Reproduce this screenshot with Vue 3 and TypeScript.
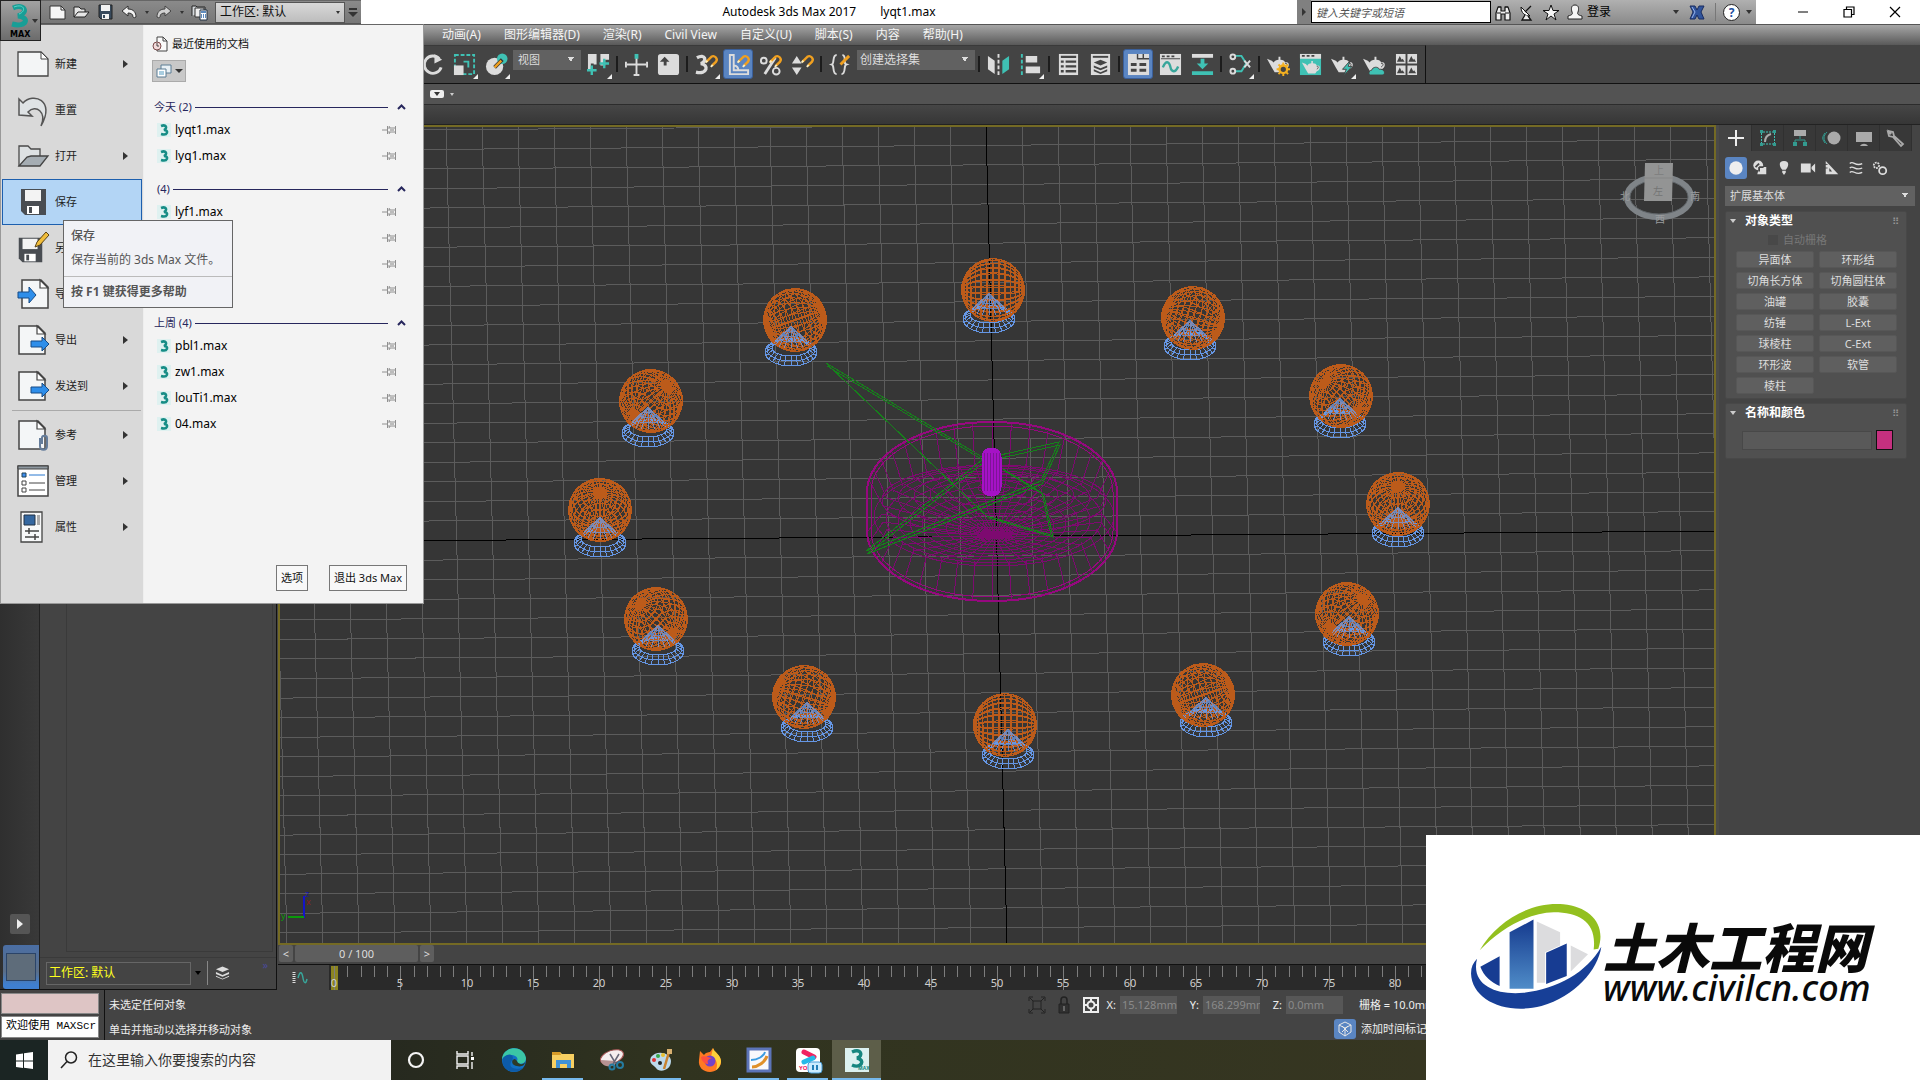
<script setup lang="ts">
interface MenuItem { label: string; icon: string; arrow: boolean; selected?: boolean; separated?: boolean }
interface FileGroup { title: string; files: string[] }
interface Tool { kind: 'button' | 'divider' | 'select'; icon?: string; active?: boolean; flyout?: boolean; text?: string; wide?: boolean }
interface Ball { x: number; y: number; bx: number; bottom: number }

const W = '#dcdcdc'
const T = '#3fc1b4'
const magnet = '<path d="M12 9l5-5a3.600 3.600 0 0 1 5 5l-4 4" fill="none" stroke="#f0a020" stroke-width="2.500"/><path d="M11 10l2-2M16.500 14.500l2-2" stroke="#fff0c0" stroke-width="2"/>'
const pot = `<path d="M0 6l5 2 2 2c1-2 3-3 5-3V4h2v3c3 0 4 1 5 3 5-2 5 6 0 7l-2 3H8l-3-5z" fill="${W}"/><path d="M19 11c3-1 2 3 0 3.500" stroke="#444" fill="none"/>`
const page = '<path d="M2 2h19l7 7v21H2z" fill="#f4f6f7" stroke="#444" stroke-width="1.500"/><path d="M20 2v8h8z" fill="#fff" stroke="#444" stroke-width="1.200"/>'
const disk = '<path d="M4 3h25v26H8l-4-4z" fill="#494d52"/><path d="M8 4h16v11H8z" fill="#f3f3f3"/><path d="M10 20h12v8H10z" fill="#fff"/><path d="M12 21h3v6h-3z" fill="#494d52"/>'

const icons: Record<string, string> = {
  rotate: `<path d="M19 6a9 9 0 1 0 2 9" fill="none" stroke="${W}" stroke-width="3"/><path d="M14 1l8 6-8 4z" fill="${W}"/>`,
  scale: `<rect x="2" y="2" width="20" height="20" fill="none" stroke="${T}" stroke-width="2" stroke-dasharray="4 2"/><rect x="1" y="13" width="10" height="10" fill="${W}"/><path d="M11 9h5v6" fill="none" stroke="${T}" stroke-width="2"/>`,
  place: `<circle cx="10" cy="14" r="9" fill="${W}"/><circle cx="18" cy="6" r="5.500" fill="${T}"/><path d="M10 15l8-8" stroke="#333" stroke-width="4"/><path d="M10 15l7-7" stroke="#f0a020" stroke-width="2.500"/>`,
  pivot: `<path d="M1 1h9v11H7v-1H4v6H1zM14 1h9v6h-4v6h-5z" fill="${W}"/><path d="M5 13v10M0 18h10M18 6v10M13 11h10" stroke="${T}" stroke-width="2.500"/>`,
  move: `<path d="M12 3v20M2 12h20" stroke="${W}" stroke-width="2"/><path d="M10 1h4v5h-4z" fill="${T}"/><path d="M1 9v6M23 9v6M9 23h6" stroke="${W}" stroke-width="2"/>`,
  keyboard: `<rect x="1" y="1" width="22" height="22" rx="3" fill="${W}"/><path d="M8 4l5 5h-3v4H7V9H3z" fill="#444"/>`,
  snap3: `<path d="M2 5c9-5 11 4 4 6 9 1 7 12-5 9" fill="none" stroke="${W}" stroke-width="3.500"/>${magnet}`,
  angle: `<path d="M3 2v20h19v-4H7V2zM7 13c5 0 5 4 5 6" fill="none" stroke="${W}" stroke-width="2"/>${magnet}`,
  percent: `<circle cx="5" cy="8" r="3" fill="none" stroke="${W}" stroke-width="2"/><circle cx="18" cy="19" r="3.500" fill="none" stroke="${W}" stroke-width="2"/><path d="M17 5L6 22" stroke="${W}" stroke-width="3"/>${magnet}`,
  spinner: `<path d="M1 11l5-8 5 8zM1 15h10l-5 8z" fill="${W}"/>${magnet}`,
  braces: `<path d="M8 2c-5 0-2 9-5 10 3 1 0 10 5 10M14 2c5 1 0 9 4 10-3 1 0 10-5 10" fill="none" stroke="${W}" stroke-width="2"/><path d="M12 12l9-9" stroke="#f0a020" stroke-width="3"/>`,
  mirror: `<path d="M1 3l7 5v14l-7-5z" fill="${W}"/><path d="M23 3l-7 5v14l7-5z" fill="${T}"/><path d="M12 1v22" stroke="${W}" stroke-width="2" stroke-dasharray="4 2"/>`,
  align: `<path d="M3 1v22" stroke="${T}" stroke-width="2" stroke-dasharray="4 2"/><path d="M7 3h12v7H7zM7 14h15v7H7z" fill="${W}"/>`,
  list: `<path d="M2 1h20v22H2z" fill="${W}"/><path d="M4 4h16M4 9h3M9 9h11M4 14h3M9 14h11M4 19h3M9 19h11" stroke="#444" stroke-width="2.500"/>`,
  layers: `<path d="M2 1h20v22H2z" fill="${W}"/><path d="M4 4h16" stroke="#444" stroke-width="2"/><path d="M12 7l7 3-7 3-7-3zM5 13l7 3 7-3v2l-7 3-7-3zM5 17l7 3 7-3v2l-7 3-7-3z" fill="#444"/>`,
  ribbon: `<path d="M1 1h22v22H1z" fill="${W}"/><path d="M11 1v5h12M17 1v5" stroke="#444" fill="none" stroke-width="1.500"/><path d="M4 12h6M13 12h7M4 18h6M13 18h7" stroke="#444" stroke-width="3"/>`,
  curve: `<path d="M1 1h22v22H1z" fill="${W}"/><path d="M2 6h20" stroke="#444" stroke-width="1"/><path d="M3 3.500h3M8 3.500h3M13 3.500h3" stroke="#444" stroke-width="2"/><path d="M4 15c4-9 7-5 8 0s5 6 8-1" stroke="#38a69b" stroke-width="2.500" fill="none"/>`,
  dope: `<path d="M1 1h22v4H1z" fill="${W}"/><path d="M1 19h22v4H1zM10 6h4v5h4l-6 6-6-6h4z" fill="${T}"/>`,
  schematic: `<path d="M7 3h6l5 8-5 8H7" stroke="${T}" fill="none" stroke-width="2"/><path d="M16 8l6 7M22 8l-6 7" stroke="${W}" stroke-width="2"/><circle cx="4" cy="4" r="2.500" fill="#444" stroke="${W}" stroke-width="2"/><circle cx="4" cy="19" r="2.500" fill="#444" stroke="${W}" stroke-width="2"/>`,
  potGear: `${pot}<circle cx="17" cy="17" r="4" fill="#444" stroke="#f3b021" stroke-width="2.500"/><path d="M17 10v3M17 21v3M10 17h3M21 17h3M12 12l2 2M20 20l2 2M22 12l-2 2M12 22l2-2" stroke="#f3b021" stroke-width="2"/>`,
  potFrame: `<path d="M1 1h22v22H1z" fill="${T}"/><path d="M1 1h22v5H1z" fill="${W}"/><path d="M3 3h3M8 3h3M13 3h3" stroke="#444" stroke-width="2"/><g transform="translate(3 5) scale(.82)">${pot}</g>`,
  potBolt: `${pot}<path d="M20 8l-8 9h4l-3 7 9-10h-4z" fill="${T}" stroke="#444"/>`,
  potCloud: `${pot}<path d="M8 23c-3 0-2-5 1-5 1-4 7-4 8-1 6-1 7 6 3 6z" fill="${T}" stroke="#444"/>`,
  gallery: `<path d="M1 1h10v10H1zM13 1h10v10H13zM1 13h10v10H1zM13 13h10v10H13z" fill="${W}"/><path d="M2 9l3-6 2 4 1-1 2 3zM14 9l3-6 2 4 1-1 2 3zM2 21l3-6 2 4 1-1 2 3zM14 21l3-6 2 4 1-1 2 3z" fill="#444"/>`,
  new: '<path d="M1 4h23l7 7v17H1z" fill="#f3f5f6" stroke="#444" stroke-width="1.300"/><path d="M24 4v7h7z" fill="#fff" stroke="#444"/>',
  reset: '<path d="M2 5l4 4c10-11 33-3 18 23 6-14-5-22-13-14l4 4-13-1z" fill="#dfe3e5" stroke="#555" stroke-width="1.500"/>',
  open: '<path d="M2 26V6h9l3 3h9v7" fill="#dde1e3" stroke="#4a4a4a" stroke-width="1.300"/><path d="M2 26l8-9 4-1h17l-8 10z" fill="#a5adb3" stroke="#444" stroke-width="1.300"/>',
  save: disk,
  saveAs: `<g transform="translate(-2 3) scale(.94)">${disk}</g><path d="M18 15l2-5L29 0l3 3-9 10z" fill="#f1bd3a" stroke="#5a4316"/>`,
  import: `<g transform="translate(3 0)">${page}</g><path d="M1 14h11v-5l7 8-7 8v-5H1z" fill="#2e8eea" stroke="#174b85"/>`,
  export: `${page}<path d="M14 17h11v-4l7 7-7 7v-4H14z" fill="#2e8eea" stroke="#174b85"/>`,
  reference: `${page}<path d="M25 25v-6c0-3 5-3 5 0v8c0 5-7 5-7 0v-8" fill="none" stroke="#657d9b" stroke-width="2"/>`,
  manage: '<path d="M1 1h30v30H1z" fill="#fff" stroke="#444" stroke-width="1.500"/><path d="M1 1h30v3H1z" fill="#8e98a0" stroke="#444"/><path d="M12 10h16" stroke="#2878d0"/><path d="M5 8h4v4H5z" fill="#3c8df0" stroke="#245"/><path d="M12 18h16M12 25h16M5 16h4v4H5zM5 23h4v4H5z" stroke="#444" fill="none"/>',
  properties: '<path d="M4 1h21v30H4z" fill="#f7f8f9" stroke="#444" stroke-width="1.300"/><path d="M7 4h11v10H7z" fill="#3467a0" stroke="#234"/><path d="M20 4h3v10h-3z" fill="#aaa"/><path d="M8 20h14M8 26h14M12 17v6M18 23v6" stroke="#444" stroke-width="1.500"/>',
  qOpen: '<path d="M1 13V3h5l2 2h4v3M1 13l4-5h11l-4 5z" fill="#e6e6e6" stroke="#222"/>',
  qNew: '<path d="M1 2h11l4 4v9H1z" fill="#f6f6f6" stroke="#333"/><path d="M12 2v4h4" fill="none" stroke="#333"/>',
  qSave: '<path d="M2 1h13v14H4l-2-2z" fill="#384a5c" stroke="#222"/><path d="M4 1h9v6H4zM5 10h7v5H5z" fill="#f2f2f2"/><path d="M6 11h2v3H6z" fill="#384a5c"/>',
  undo: '<path d="M1 7l6-5v3c6 0 8 4 8 8-2 1-2 1-3 0 0-3-2-4-5-4v3z" fill="#f2f2f2" stroke="#333"/>',
  redo: '<path d="M15 7L9 2v3c-6 0-8 4-8 8 2 1 2 1 3 0 0-3 2-4 5-4v3z" fill="#d2d2d2" stroke="#444"/>',
  project: '<path d="M1 12V2h4l1 1h8v3" fill="#d5d9dc" stroke="#222"/><path d="M4 4h9v9H4z" fill="#eee" stroke="#333"/><path d="M9 6h7v10H9z" fill="#fff" stroke="#234"/><path d="M10 8h5M10 11h1M12 11h1M14 11h1M10 13h1M12 13h1M14 13h1" stroke="#2a66a8" stroke-width="1.500"/>',
  binoculars: '<path d="M1 16V9l2-6h3v4h4V3h3l2 6v7h-5v-6H6v6z" fill="#f0f0f0" stroke="#111" stroke-width="1.200"/><path d="M3 3h3M10 3h3M2 9h4M10 9h4" stroke="#111"/>',
  dish: '<path d="M2 3c0 6 4 9 9 9z" fill="#fff" stroke="#111"/><path d="M6 8l6-6M6 11l-3 5h9l-3-4" fill="#eee" stroke="#111" stroke-width="1.300"/>',
  star: '<path d="M8 1l2 5.500h6l-5 3.500 2 6-5-4-5 4 2-6-5-3.500h6z" fill="#f5f5f5" stroke="#111"/>',
  user: '<path d="M8 1c4 0 4 4 3 7-1 2 0 3 4 4v3H1v-3c4-1 5-2 4-4-1-3-1-7 3-7z" fill="#f5f5f5" stroke="#222"/>',
  exchange: '<path d="M1 2h5l2 4 2-4h5l-3 6 3 7h-5l-2-4-2 4H1l3-7z" fill="#30549c" stroke="#1a2c60"/><path d="M3 3l3 5-3 6" stroke="#9bb6ee" fill="none"/>',
  cCreate: '<path d="M9 1v16M1 9h16" stroke="#eee" stroke-width="2"/>',
  cModify: `<path d="M4 3h10M4 15h10M2.500 4v10M15.500 4v10" stroke="${T}" stroke-dasharray="2 1"/><path d="M1 1h3v3H1zM14 1h3v3h-3zM1 14h3v3H1zM14 14h3v3h-3z" fill="#339b90"/><path d="M6 13c0-5 2-7 6-8" stroke="#aaa" stroke-width="2" fill="none"/>`,
  cHierarchy: '<path d="M3 1h12v6H3z" fill="#aaa"/><path d="M9 7v3M4 14v-3h10v3" stroke="#339b90" fill="none"/><path d="M2 13h4v4H2zM12 13h4v4h-4z" fill="#339b90"/>',
  cMotion: '<circle cx="11" cy="9" r="6.500" fill="#aaa"/><path d="M4 3c-4 4-4 8 0 12M2 4c-3 4-3 6 0 10" stroke="#339b90" fill="none"/>',
  cDisplay: '<path d="M1 3h16v10H1z" fill="#aaa"/><path d="M5 17c2-3 6-3 8 0z" fill="#aaa"/>',
  cUtility: '<path d="M2 2l4 1 1 4 9 8-2 2-8-9-4-1-1-4 3 2z" fill="none" stroke="#aaa" stroke-width="1.800"/>',
  gGeometry: '<circle cx="9" cy="9" r="7.500" fill="#eee"/>',
  gShapes: '<circle cx="7" cy="6" r="5.500" fill="#ddd"/><path d="M8 8h8v8H6z" fill="#ddd"/><path d="M4 8l4-4M8 8h5M8 8v5" stroke="#444" stroke-width="2"/>',
  gLight: '<path d="M9 1c7 0 5 7 2 10H7C4 8 2 1 9 1zM7 12h4v2l-2 3-2-3z" fill="#ddd"/>',
  gCamera: '<path d="M1 4h11v10H1zM13 8l4-4v10l-4-4z" fill="#ddd"/>',
  gHelper: '<path d="M2 1l14 15H2z" fill="#ddd"/><path d="M6 9l3 4H6z" fill="#444"/><path d="M1 5h3M1 9h3" stroke="#444"/>',
  gWarp: '<path d="M2 4c4-4 6 4 14 0M2 9c4-4 6 4 14 0M2 14c4-4 6 4 14 0" stroke="#ddd" stroke-width="1.500" fill="none"/>',
  gSystem: '<circle cx="5" cy="6" r="3" stroke="#ddd" stroke-width="2" fill="none" stroke-dasharray="2 1"/><circle cx="12" cy="12" r="4" stroke="#ddd" stroke-width="2" fill="none"/>',
}

const quickIcons = ['qNew', 'qOpen', 'qSave', 'undo', 'arrow', 'redo', 'arrow', 'project']
const menuBar = ['动画(A)', '图形编辑器(D)', '渲染(R)', 'Civil View', '自定义(U)', '脚本(S)', '内容', '帮助(H)']

const b = (icon: string, extra: Partial<Tool> = {}): Tool => ({ kind: 'button', icon, ...extra })
const d: Tool = { kind: 'divider' }
const tools: Tool[] = [
  b('rotate'), b('scale', { flyout: true }), b('place', { flyout: true }),
  { kind: 'select', text: '视图' },
  b('pivot', { flyout: true }), d, b('move'), b('keyboard'), d,
  b('snap3', { flyout: true }), b('angle', { active: true }), b('percent'), b('spinner'), d, b('braces'),
  { kind: 'select', text: '创建选择集', wide: true }, d,
  b('mirror'), b('align', { flyout: true }), d, b('list'), b('layers'), d,
  b('ribbon', { active: true }), b('curve'), b('dope'), d, b('schematic', { flyout: true }), d,
  b('potGear'), b('potFrame'), b('potBolt', { flyout: true }), b('potCloud'), b('gallery'),
]

const appMenu: MenuItem[] = [
  { label: '新建', icon: 'new', arrow: true },
  { label: '重置', icon: 'reset', arrow: false },
  { label: '打开', icon: 'open', arrow: true },
  { label: '保存', icon: 'save', arrow: false, selected: true },
  { label: '另存为', icon: 'saveAs', arrow: false },
  { label: '导入', icon: 'import', arrow: false },
  { label: '导出', icon: 'export', arrow: true },
  { label: '发送到', icon: 'export', arrow: true },
  { label: '参考', icon: 'reference', arrow: true, separated: true },
  { label: '管理', icon: 'manage', arrow: true },
  { label: '属性', icon: 'properties', arrow: true },
]
const fileGroups: FileGroup[] = [
  { title: '今天 (2)', files: ['lyqt1.max', 'lyq1.max'] },
  { title: '(4)', files: ['lyf1.max', '', '', ''] },
  { title: '上周 (4)', files: ['pbl1.max', 'zw1.max', 'louTi1.max', '04.max'] },
]

const commandTabs = ['cCreate', 'cModify', 'cHierarchy', 'cMotion', 'cDisplay', 'cUtility']
const categories = ['gGeometry', 'gShapes', 'gLight', 'gCamera', 'gHelper', 'gWarp', 'gSystem']
const objectTypes = ['异面体', '环形结', '切角长方体', '切角圆柱体', '油罐', '胶囊', '纺锤', 'L-Ext', '球棱柱', 'C-Ext', '环形波', '软管', '棱柱']
const coords = [{ axis: 'X', value: '15.128mm' }, { axis: 'Y', value: '168.299mm' }, { axis: 'Z', value: '0.0mm' }]

// Home grid of the perspective viewport
let gridPath = ''
for (let i = -21; i <= 21; i++) if (i !== 0) gridPath += `M${986 + 36 * i} 127L${1007 + 36 * i} 943`
const rowY = (x: number, j: number): number => 538.3 - 0.0073 * (x - 740) + 19.56 * j
for (let j = -22; j <= 22; j++) if (j !== 0) gridPath += `M280 ${rowY(280, j).toFixed(1)}L1714 ${rowY(1714, j).toFixed(1)}`
const axisPath = `M986 127L1007 943M280 ${rowY(280, 0)}L1714 ${rowY(1714, 0)}`

const balls: Ball[] = [
  { x: 993, y: 290, bx: 989, bottom: 333 }, { x: 795, y: 320, bx: 791, bottom: 366 },
  { x: 651, y: 401, bx: 648, bottom: 447 }, { x: 600, y: 510, bx: 600, bottom: 557 },
  { x: 656, y: 619, bx: 658, bottom: 665 }, { x: 804, y: 697, bx: 807, bottom: 742 },
  { x: 1005, y: 725, bx: 1008, bottom: 769 }, { x: 1203, y: 695, bx: 1206, bottom: 737 },
  { x: 1347, y: 614, bx: 1349, bottom: 656 }, { x: 1398, y: 504, bx: 1398, bottom: 547 },
  { x: 1341, y: 396, bx: 1340, bottom: 438 }, { x: 1193, y: 318, bx: 1190, bottom: 360 },
]
const TILT = 0.55
const DEPTH = Math.sqrt(1 - TILT * TILT)

// Wireframe sphere whose pole follows the tangent of the ring it stands on
function spherePath(p: Ball): string {
  const px = (p.x - 1000) / 399
  const py = (p.y - 508) / 217
  const len = Math.hypot(px, py)
  const tx = -py / len
  const ty = px / len
  const project = (a: number, u: number, v: number): string => {
    const X = a * tx - u * ty
    const Y = a * ty + u * tx
    return `${(p.x + 31.5 * X).toFixed(1)} ${(p.y + 31.5 * (Y * TILT - v * DEPTH)).toFixed(1)}`
  }
  let out = ''
  for (let m = 0; m < 14; m++) {
    const lon = (m * Math.PI) / 14
    for (let s = 0; s <= 32; s++) {
      const t = (s * 2 * Math.PI) / 32
      out += (s ? 'L' : 'M') + project(Math.cos(t), Math.sin(t) * Math.cos(lon), Math.sin(t) * Math.sin(lon))
    }
  }
  for (let k = 1; k < 16; k++) {
    const lat = (k * Math.PI) / 16
    for (let s = 0; s <= 32; s++) {
      const t = (s * 2 * Math.PI) / 32
      out += (s ? 'L' : 'M') + project(Math.cos(lat), Math.sin(lat) * Math.cos(t), Math.sin(lat) * Math.sin(t))
    }
  }
  return out
}

function basePath(p: Ball): string {
  const cy = p.bottom - 14
  let out = ''
  const rings = [[26, 14, 0], [24, 11, -2], [19, 8, -4]]
  for (const [rx, ry, dy] of rings) out += `M${p.bx - rx} ${cy + dy}a${rx} ${ry} 0 1 0 ${rx * 2} 0a${rx} ${ry} 0 1 0 ${-rx * 2} 0`
  for (let i = 0; i < 24; i++) {
    const t = (i * Math.PI) / 12
    out += `M${(p.bx + 26 * Math.cos(t)).toFixed(1)} ${(cy + 14 * Math.sin(t)).toFixed(1)}L${(p.bx + 19 * Math.cos(t)).toFixed(1)} ${(cy - 4 + 8 * Math.sin(t)).toFixed(1)}`
  }
  return out
}

function conePath(p: Ball): string {
  const tip = p.bottom - 40
  let out = ''
  for (let i = 0; i < 16; i++) {
    const t = (i * Math.PI) / 8
    out += `M${p.bx} ${tip}L${(p.bx + 17 * Math.cos(t)).toFixed(1)} ${(tip + 17 + 5 * Math.sin(t)).toFixed(1)}`
  }
  for (const k of [4, 8, 12]) out += `M${p.bx - k} ${tip + k}a${k} ${k / 3} 0 0 0 ${k * 2} 0`
  return out
}

// Round table: outer silhouette, floor rings, spokes and wall struts
const ring = (cx: number, cy: number, rx: number, ry: number): string => `M${cx - rx} ${cy}a${rx} ${ry} 0 1 0 ${rx * 2} 0a${rx} ${ry} 0 1 0 ${-rx * 2} 0`
const hull = (inset: number): string => {
  const rx = 125 - inset
  const ry = 70 - inset
  return `M${992 - rx} 492a${rx} ${ry} 0 0 1 ${rx * 2} 0V531a${rx} ${ry} 0 0 1 ${-rx * 2} 0z`
}
const outerRim = hull(0)
const innerRim = hull(4)
let tablePath = ''
for (let k = 1; k < 11; k++) tablePath += ring(994, 536 - k * 2, k * 12, k * 5)
for (let k = 1; k < 8; k++) tablePath += ring(994, 486 + k * 2, k * 16, k * 5)
for (let i = 0; i < 40; i++) {
  const c = Math.cos((i * Math.PI) / 20)
  const s = Math.sin((i * Math.PI) / 20)
  tablePath += `M995 536L${(992 + 110 * c).toFixed(1)} ${(514 + 52 * s).toFixed(1)}`
  tablePath += `M${(992 + 110 * c).toFixed(1)} ${(514 + 48 * s).toFixed(1)}L${(992 + 124 * c).toFixed(1)} ${((s < 0 ? 492 : 531) + 70 * s).toFixed(1)}`
}
let capsulePath = ''
for (let x = 984; x < 1001; x += 3) capsulePath += `M${x} 453V491`

const greenPoints = '826,363 982,457 1000,455 1059,442 1041,481 866,551 982,460'
const greenPoints2 = '826,363 957,488 987,516 1051,535 1042,493 1003,469'

const frames = Array.from({ length: 101 }, (_, i) => ({ i, x: 5 + i * 13.26, major: i % 5 === 0 }))
</script>

<template>
  <div class="app">
    <header class="titlebar">
      <div class="quick">
        <template v-for="(q, i) in quickIcons" :key="i">
          <span v-if="q === 'arrow'" class="caret dark" />
          <button v-else class="bare" :aria-label="q"><svg viewBox="0 0 17 17" width="17" height="17" v-html="icons[q]" /></button>
        </template>
        <button class="workspace">工作区: 默认<span class="caret dark" /></button>
        <button class="bare quickend" aria-label="more"><span class="bar" /><span class="caret dark big" /></button>
      </div>
      <div class="title"><span>Autodesk 3ds Max 2017</span><span>lyqt1.max</span></div>
      <div class="info">
        <button class="bare infoarrow" aria-label="toggle"><span class="tri" /></button>
        <input class="search" placeholder="键入关键字或短语" aria-label="search">
        <button v-for="q in ['binoculars', 'dish', 'star', 'user']" :key="q" class="bare infoic" :aria-label="q"><svg viewBox="0 0 17 17" width="17" height="17" v-html="icons[q]" /></button>
        <span class="login">登录</span>
        <span class="caret dark" />
        <button class="bare xch" aria-label="exchange"><svg viewBox="0 0 17 17" width="17" height="17" v-html="icons.exchange" /></button>
        <span class="vline" />
        <span class="help">?</span>
        <span class="caret dark" />
      </div>
      <div class="winctl">
        <button class="bare" aria-label="minimize"><svg width="12" height="12"><path d="M1 6h10" stroke="#000" /></svg></button>
        <button class="bare" aria-label="restore"><svg width="12" height="12"><path d="M1 3.500h7.500V11H1zM3.500 3V1H11v7.500H9" fill="none" stroke="#000" stroke-width="1.200" /></svg></button>
        <button class="bare" aria-label="close"><svg width="12" height="12"><path d="M1 1l10 10M11 1L1 11" stroke="#000" stroke-width="1.200" /></svg></button>
      </div>
    </header>

    <nav class="menubar"><a v-for="m in menuBar" :key="m" href="#">{{ m }}</a></nav>

    <div class="toolrow">
      <div class="toolbar">
        <template v-for="(t, i) in tools" :key="i">
          <span v-if="t.kind === 'divider'" class="tdiv" />
          <select v-else-if="t.kind === 'select'" class="tsel" :class="{ wide: t.wide }" :aria-label="t.text"><option>{{ t.text }}</option></select>
          <button v-else class="tool" :class="{ active: t.active, flyout: t.flyout }" :aria-label="t.icon"><svg viewBox="0 0 24 24" width="23" height="23" v-html="icons[t.icon ?? '']" /></button>
        </template>
      </div>
    </div>
    <div class="ribbon"><button class="bare ribbtn" aria-label="ribbon"><span class="caret dark" /></button><span class="caret light" /></div>
    <div class="tabshade" />

    <main class="body">
      <aside class="left">
        <div class="strip">
          <button class="play" aria-label="play"><span class="tri white" /></button>
          <button class="layout" aria-label="layout"><span /></button>
        </div>
        <div class="explorer">
          <div class="tree"><div class="treein" /></div>
          <div class="wsrow">
            <span class="wsname">工作区: 默认</span><span class="caret black" /><span class="wsline" />
            <svg width="15" height="16" viewBox="0 0 16 16"><path d="M8 1l7 3-7 3-7-3zM1 7l7 3 7-3v2l-7 3-7-3zM1 11l7 3 7-3v1l-7 3-7-3z" fill="#ddd" /></svg>
            <span class="more">»</span>
          </div>
        </div>
      </aside>

      <section class="center">
        <div class="viewport">
          <svg viewBox="280 127 1434 816" preserveAspectRatio="xMinYMin slice">
            <g fill="none" shape-rendering="crispEdges">
              <path :d="gridPath" stroke="#5c5c5c" />
              <path :d="axisPath" stroke="#000" />
              <path :d="tablePath" stroke="#7d0a70" />
              <path :d="outerRim" stroke="#96087f" stroke-width="2" /><path :d="innerRim" stroke="#96087f" />
              <g stroke="#15821a">
                <polyline :points="greenPoints" /><polyline :points="greenPoints" transform="translate(1 3)" />
                <polyline :points="greenPoints2" /><polyline :points="greenPoints2" transform="translate(2 2)" />
              </g>
              <rect x="982" y="448" width="19" height="48" rx="9" fill="#a512c6" stroke="#a512c6" />
              <path :d="capsulePath" stroke="#7d1496" />
              <g v-for="(p, i) in balls" :key="i">
                <path :d="basePath(p)" stroke="#6596e4" />
                <path :d="spherePath(p)" stroke="#bc5b1a" />
                <path :d="conePath(p)" stroke="#6f9be6" stroke-opacity=".75" />
              </g>
              <path d="M304 896V918" stroke="#1414c8" stroke-width="2" /><path d="M288 917H304" stroke="#0a9a0a" stroke-width="2" />
            </g>
            <g class="gizmo"><text x="305" y="897" fill="#1818b0">z</text><text x="281" y="919" fill="#0a9a0a">y</text><text x="306" y="905" fill="#8a2020">x</text></g>
            <ellipse cx="1659" cy="197" rx="32" ry="20" fill="none" stroke="#7f8488" stroke-width="6" />
            <ellipse cx="1659" cy="197" rx="29" ry="17" fill="none" stroke="#5f6468" />
            <path d="M1645 163h28l-1 38h-28z" fill="#939494" /><path d="M1644 178h29" stroke="#858686" />
            <g class="cube"><text x="1654" y="174" fill="#7c7d7d">上</text><text x="1653" y="195" fill="#747575">左</text><text x="1620" y="200" fill="#9a9c9e">北</text><text x="1690" y="200" fill="#9a9c9e">南</text><text x="1655" y="223" fill="#9a9c9e">西</text></g>
          </svg>
        </div>
        <div class="timerow"><button class="tbtn">&lt;</button><button class="tslide">0 / 100</button><button class="tbtn">&gt;</button></div>
        <div class="track">
          <div class="trackic"><svg width="16" height="14"><path d="M2 1v12" stroke="#ddd" stroke-width="3" stroke-dasharray="1 1" /><path d="M6 7c2-8 4-6 5 0s3 6 4 1" fill="none" stroke="#38a69b" stroke-width="1.500" /></svg></div>
          <svg class="ruler">
            <rect x="2" y="1" width="7" height="24" fill="#8b8420" />
            <g v-for="f in frames" :key="f.i">
              <path :d="`M${Math.round(f.x)}.5 1v${f.major ? 24 : 11}`" stroke="#7d7d7d" />
              <text v-if="f.major" :x="Math.round(f.x)" y="22" text-anchor="middle">{{ f.i }}</text>
            </g>
          </svg>
        </div>
      </section>

      <aside class="command">
        <div class="ctabs"><button v-for="(c, i) in commandTabs" :key="c" :class="{ on: i === 0 }" :aria-label="c"><svg viewBox="0 0 18 18" width="18" height="18" v-html="icons[c]" /></button></div>
        <div class="cats"><button v-for="(c, i) in categories" :key="c" :class="{ on: i === 0 }" :aria-label="c"><svg viewBox="0 0 18 18" width="16" height="16" v-html="icons[c]" /></button></div>
        <select class="kind" aria-label="category"><option>扩展基本体</option></select>
        <section class="roll">
          <h2><span class="caret light" />对象类型<span class="grip">⠿</span></h2>
          <label class="autogrid"><input type="checkbox" disabled>自动栅格</label>
          <div class="types"><button v-for="o in objectTypes" :key="o">{{ o }}</button></div>
        </section>
        <section class="roll">
          <h2><span class="caret light" />名称和颜色<span class="grip">⠿</span></h2>
          <div class="namerow"><input type="text" aria-label="name"><button aria-label="color" /></div>
        </section>
      </aside>
    </main>

    <footer class="status">
      <div class="script"><div class="pink" /><div class="listener">欢迎使用 MAXScr</div></div>
      <div class="prompts"><p>未选定任何对象</p><p>单击并拖动以选择并移动对象</p></div>
      <div class="coordarea">
        <div class="coordrow">
          <div class="cicons">
            <svg width="18" height="18" viewBox="0 0 18 18"><path d="M5 5h8v8H5zM1 5V1h4M13 1h4v4M17 13v4h-4M5 17H1v-4M2 2l3 3M16 2l-3 3M2 16l3-3M16 16l-3-3" fill="none" stroke="#222" /></svg>
            <svg width="18" height="18" viewBox="0 0 18 18"><path d="M4 8h10v9H4z" fill="#303030" stroke="#222" /><path d="M6 8V4c0-4 6-4 6 0v4" fill="none" stroke="#222" stroke-width="1.500" /><path d="M9 10v5" stroke="#666" stroke-width="2" /></svg>
            <svg width="18" height="18" viewBox="0 0 18 18"><path d="M2 2h14v14H2z" fill="#444" stroke="#eee" stroke-width="2" /><circle cx="9" cy="9" r="3.500" fill="none" stroke="#eee" stroke-width="2" /><path d="M9 2v4M9 12v4M2 9h4M12 9h4" stroke="#eee" stroke-width="2" /></svg>
          </div>
          <label v-for="c in coords" :key="c.axis">{{ c.axis }}:<input :value="c.value" disabled></label>
          <span class="gridtext">栅格 = 10.0mm</span>
        </div>
        <div class="tagrow">
          <button aria-label="tag"><svg width="16" height="16" viewBox="0 0 16 16"><path d="M8 1l6 3v7l-6 4-6-4V4zM2 4l6 3 6-3M8 7v8" fill="none" stroke="#e8e8e8" /><path d="M5 5l6 6M11 5l-6 6" stroke="#e8e8e8" /></svg></button><span>添加时间标记</span>
        </div>
      </div>
    </footer>

    <div class="taskbar">
      <button class="start" aria-label="start"><svg width="17" height="17"><path d="M0 2.500l7-1v7H0zM8 1.300L17 0v8.500H8zM0 9.500h7v6.500l-7-1zM8 9.500h9V17l-9-1.200z" fill="#fff" /></svg></button>
      <label class="tsearch"><svg width="18" height="18"><circle cx="11" cy="6.500" r="5.500" fill="none" stroke="#222" stroke-width="1.500" /><path d="M7 10.500L1 17" stroke="#222" stroke-width="1.500" /></svg><input placeholder="在这里输入你要搜索的内容"></label>
      <button class="tk" aria-label="cortana"><svg viewBox="0 0 24 24"><circle cx="12" cy="12" r="7" fill="none" stroke="#f4f4f4" stroke-width="2.200" /></svg></button>
      <button class="tk" aria-label="task view"><svg viewBox="0 0 24 24"><path d="M4 8h11v8H4zM4 3v3h11V3M4 21v-3h11v3M19 4v4M19 14v7" fill="none" stroke="#f4f4f4" stroke-width="1.400" /><path d="M18 9h3v3h-3z" fill="#fff" /></svg></button>
      <button class="tk" aria-label="edge"><svg viewBox="0 0 24 24"><circle cx="12" cy="12" r="12" fill="#1170c4" /><path d="M0 11C1-2 21-4 24 10c0 7-8 7-9 3 3-6-9-9-15-2z" fill="#3bc6a5" /><path d="M1 10C8 3 14 8 9 14c-3 6 5 8 12 6-6 7-23 4-20-10z" fill="#0d5ba8" /><path d="M15 13c1 4 7 4 8 1 0 4-5 6-11 3-3-2-2-6 1-6z" fill="#2d3a28" /></svg></button>
      <button class="tk run" aria-label="explorer"><svg viewBox="0 0 24 24"><path d="M1 4h8l2 2h12v14H1z" fill="#f7cf61" /><path d="M1 4h8l1 3H1z" fill="#d79b28" /><path d="M5 20v-8h15v8h-4v-4H9v4z" fill="#3f91d6" /></svg></button>
      <button class="tk" aria-label="snip"><svg viewBox="0 0 24 24"><ellipse cx="12" cy="9" rx="12" ry="6.500" transform="rotate(-20 12 9)" fill="#f5eeee" stroke="#a35353" /><path d="M1 12c0 6 8 8 14 5v-4z" fill="#b79292" /><path d="M10 6l6 10M19 6l-6 10" stroke="#667" stroke-width="1.500" /><circle cx="12" cy="19" r="2.500" fill="none" stroke="#257ba0" stroke-width="2" /><circle cx="20" cy="17" r="3" fill="none" stroke="#257ba0" stroke-width="2" /></svg></button>
      <button class="tk run" aria-label="paint"><svg viewBox="0 0 24 24"><path d="M2 9c6-8 20-4 20 4 0 10-12 12-15 7-2-3-8-4-5-11z" fill="#bcd9ec" /><circle cx="5" cy="12" r="2" fill="#d33" /><circle cx="9" cy="8" r="2" fill="#38a848" /><circle cx="14" cy="7" r="2" fill="#e8c030" /><circle cx="11" cy="15" r="2" fill="#222" /><path d="M15 21l5-17" stroke="#c8822e" stroke-width="2.500" /><path d="M18 1h5v5h-5z" fill="#d8b070" /></svg></button>
      <button class="tk" aria-label="firefox"><svg viewBox="0 0 24 24"><path d="M2 3l4 4c2-3 6-3 6-3l3-4c1 4 8 7 8 14 0 6-6 10-11 10C5 24 0 19 1 12z" fill="#ff7a22" /><path d="M15 0c1 4 8 7 8 13 0 4-3 8-5 9 3-8-1-12-5-13z" fill="#ffd03a" /><circle cx="12" cy="13" r="5.500" fill="#7443c8" /><path d="M3 9c3-2 8 1 11 1-4 1-5 3-4 5s-6 1-7-6z" fill="#ff5040" /></svg></button>
      <button class="tk run" aria-label="drawing"><svg viewBox="0 0 24 24"><path d="M1 1h22v22H1z" fill="#f8f8fc" stroke="#5c74b8" stroke-width="3" /><path d="M4 12c7 0 13-4 14-8" fill="none" stroke="#3b9be0" stroke-width="2" /><path d="M5 19c6 0 13-5 15-11" fill="none" stroke="#e0902a" stroke-width="3" /></svg></button>
      <button class="tk run" aria-label="video"><svg viewBox="0 0 24 24"><rect width="24" height="24" rx="4" fill="#fff" /><path d="M8 4l10 5" stroke="#f22361" stroke-width="5" stroke-linecap="round" /><path d="M8 14l9-4" stroke="#25b9e8" stroke-width="5" stroke-linecap="round" /><text x="3" y="22" font-size="6" fill="#f22361" font-weight="700">YO</text><rect x="12" y="14" width="14" height="11" rx="3" fill="#ccecff" stroke="#4b9fd8" /><path d="M17 17v5M21 17v5" stroke="#2580b8" stroke-width="2" /></svg></button>
      <button class="tk run cur" aria-label="3ds Max"><svg viewBox="0 0 24 24"><path d="M0 0h24v24H0z" fill="#dcf1f0" /><path d="M7 4c9-4 12 4 5 6 9 2 4 11-5 7" fill="none" stroke="#16867f" stroke-width="3.500" /><text x="13" y="22" font-size="5" fill="#16867f" font-weight="700">MAX</text></svg></button>
    </div>

    <!-- Application menu -->
    <button class="maxbtn" aria-label="3ds Max"><svg width="18" height="24" viewBox="0 0 18 24"><path d="M2 4c12-5 16 5 5 8 12 1 9 12-6 8" fill="none" stroke="#189e96" stroke-width="5" /><path d="M3 3c10-4 13 4 5 7" fill="none" stroke="#5cd6c9" /></svg><span class="caret dark" /><span class="maxword">MAX</span></button>
    <div class="appmenu">
      <div class="acts">
        <button v-for="m in appMenu" :key="m.label" class="act" :class="{ sel: m.selected, sep: m.separated }">
          <svg viewBox="0 0 32 32" width="32" height="32" v-html="icons[m.icon]" /><span>{{ m.label }}</span><i v-if="m.arrow" class="tri" />
        </button>
      </div>
      <div class="recent">
        <div class="rtitle"><svg width="16" height="16"><path d="M5 1h6l4 4v10H5z" fill="#fafafa" stroke="#444" /><path d="M11 1v4h4" fill="none" stroke="#444" /><circle cx="5" cy="10" r="4" fill="#f3dada" stroke="#7a4a4a" /><path d="M5 7v3h2" stroke="#444" fill="none" /></svg>最近使用的文档</div>
        <button class="viewsel" aria-label="view"><svg width="16" height="14"><path d="M5 1h10v8H5z" fill="#e8f0f5" stroke="#5a7d94" /><path d="M1 5h9v8H1z" fill="#fff" stroke="#5a7d94" /><path d="M3 7h5v4H3z" fill="#a8cde0" /></svg><span class="caret dark" /></button>
        <div v-for="g in fileGroups" :key="g.title">
          <div class="ghead" :class="{ inset: g.title === '(4)' }"><span>{{ g.title }}</span><hr><svg width="9" height="6"><path d="M1 5l3.500-3.500L8 5" fill="none" stroke="#26265c" stroke-width="2" /></svg></div>
          <div v-for="(f, i) in g.files" :key="i" class="file">
            <svg width="14" height="14" viewBox="0 0 14 14"><path d="M0 0h14v14H0z" fill="#dff1f0" /><path d="M4 3c5-2 7 2 3 4 5 0 4 6-3 4" fill="none" stroke="#178d86" stroke-width="2.500" /></svg>
            <span>{{ f }}</span>
            <svg width="15" height="10"><path d="M0 5h5M5.500 1v8M5.500 3h8M5.500 7h8M13.500 1v8M7 1l1 2M7 9l1-2" fill="none" stroke="#909090" /><path d="M8 4h4v2H8z" fill="#bbb" /></svg>
          </div>
        </div>
        <div class="btns"><button>选项</button><button>退出 3ds Max</button></div>
      </div>
    </div>
    <div class="tooltip" role="tooltip"><strong>保存</strong><p>保存当前的 3ds Max 文件。</p><strong class="f1">按 F1 键获得更多帮助</strong></div>

    <div class="brand">
      <svg class="emblem" viewBox="150 220 398 322" width="133" height="107">
        <defs><linearGradient id="tower" x1="0" y1="0" x2="0" y2="1"><stop offset="0" stop-color="#153a8e" /><stop offset="1" stop-color="#4f8cc8" /></linearGradient></defs>
        <path d="M350 276l70 32v40l-45 20v92h-25zM452 348l52 26-52 52z" fill="#dcdcde" />
        <path d="M178 362C230 275 330 215 430 224c80 8 130 60 105 134l-14 2c10-80-40-112-120-112-80 2-160 50-223 114z" fill="#93c01f" />
        <path d="M180 412l58-32v90c-25-12-48-30-58-58zM378 370l62-28v98l-62 24z" fill="#173c92" />
        <path d="M268 308l72-38v208h-72z" fill="url(#tower)" />
        <path d="M170 388c-20 80 60 110 140 102 100-10 190-60 234-138-10 70-80 150-180 178-110 28-210-20-212-98 0-18 6-32 18-44z" fill="#173f97" />
      </svg>
      <div class="bwords"><div class="cn">土木工程网</div><div class="url">www.civilcn.com</div></div>
    </div>
  </div>
</template>

<style>
body { margin: 0; background: #fff; }
</style>

<style scoped>
.app { position: relative; box-sizing: border-box; display: flex; flex-direction: column; min-height: 100vh; overflow: hidden; background: #444; border-bottom: 2px solid #fff; color: #ddd; font: 11px/16px "Noto Sans", "Noto Sans CJK SC", sans-serif; }
.app * { box-sizing: border-box; }
button, input, select { font: inherit; color: inherit; padding: 0; margin: 0; border: 0; border-radius: 0; outline: 0; }
select { appearance: none; }
p, h2 { margin: 0; }
svg { flex: none; overflow: visible; }
.bare { background: none; display: flex; align-items: center; justify-content: center; }
.caret { flex: none; width: 0; height: 0; border: 3px solid transparent; border-bottom: 0; border-top: 4px solid #333; }
.caret.big { border-width: 5px 5px 0; }
.caret.light { border-top-color: #ccc; }
.caret.black { border-top-color: #000; }
.tri { width: 0; height: 0; border: 4px solid transparent; border-right: 0; border-left: 4px solid #333; }
.tri.white { border-width: 5px 0 5px 6px; border-left-color: #eee; }

.titlebar { display: flex; height: 24px; background: #fff; color: #000; font-size: 12px; }
.quick { display: flex; align-items: center; gap: 7px; width: 361px; padding-left: 49px; background: linear-gradient(#8a8a8a, #777); border-bottom: 1px solid #555; border-top: 1px solid #666; }
.quick > .caret { border-width: 3px 2px 0; }
.workspace { display: flex; flex: none; align-items: center; justify-content: space-between; width: 130px; height: 21px; padding: 0 4px; background: linear-gradient(#d8d8d8, #bdbdbd); border: 1px solid #555; color: #111; }
.workspace .caret { border-width: 3px 2px 0; }
.quickend { flex: 1; flex-direction: column; gap: 2px; margin-left: -7px; }
.bar { width: 8px; height: 2px; background: #333; }
.title { flex: 1; display: flex; justify-content: center; gap: 24px; line-height: 23px; }
.info { display: flex; align-items: center; width: 459px; padding-right: 4px; background: linear-gradient(#b0b0b0, #8a8a8a); }
.infoarrow { width: 14px; height: 24px; background: #808080; }
.search { width: 180px; height: 22px; padding: 0 4px; background: #fff; border: 1px solid #000; font-size: 11px; font-style: italic; }
.search::placeholder { color: #555; opacity: 1; }
.infoic { width: 24px; }
.login { margin-right: auto; }
.xch { width: 36px; }
.vline { width: 1px; height: 18px; margin-right: 7px; background: #777; }
.help { width: 17px; height: 17px; margin-right: 6px; border: 1px solid #222; border-radius: 50%; background: #fff; color: #1d4fa0; font-weight: 700; text-align: center; line-height: 15px; }
.winctl { display: flex; width: 164px; padding-left: 24px; }
.winctl button { width: 46px; }

.menubar { display: flex; gap: 23px; height: 21px; padding-left: 442px; background: linear-gradient(#a6a6a6, #595959); border-top: 1px solid #555; line-height: 20px; font-size: 12px; }
.menubar a { color: #f4f4f4; text-decoration: none; white-space: nowrap; }
.toolrow { height: 39px; border-bottom: 1px solid #111; background: #444; }
.toolbar { display: flex; align-items: flex-start; width: 1426px; height: 38px; padding: 3px 0 0 416px; border-right: 1px solid #111; border-top: 1px solid #3a3a3a; }
.tool { position: relative; display: flex; align-items: center; justify-content: center; width: 32px; height: 30px; background: none; }
.tool.active { width: 30px; margin: 0 1px; background: #5a85c2; border: 1px solid #3a5f9a; border-radius: 3px; }
.tool.flyout::after { content: ""; position: absolute; right: 2px; bottom: 0; border-style: solid; border-width: 0 0 5px 5px; border-color: transparent transparent #eee; }
.tdiv { flex: none; width: 2px; height: 16px; margin: 7px 2px; background: #1c1c1c; }
.tsel, .kind { background: #616161; background-image: linear-gradient(to bottom left, #ddd 50%, transparent 50%), linear-gradient(to bottom right, #ddd 50%, transparent 50%); background-size: 3px 5px; background-position: right 10px top 7px, right 7px top 7px; background-repeat: no-repeat; color: #ddd; }
.tsel { width: 68px; height: 20px; margin: 1px 1px 0; padding-left: 5px; }
.tsel.wide { width: 118px; padding-left: 3px; font-size: 12px; }
.ribbon { display: flex; align-items: center; gap: 6px; height: 21px; padding-left: 430px; background: #535353; border-bottom: 1px solid #2c2c2c; }
.ribbtn { width: 14px; height: 8px; background: #eee; border-radius: 2px; }
.ribbon > .caret { border-width: 3px 2px 0; }
.tabshade { height: 20px; background: linear-gradient(#464646, #363636); border-bottom: 1px solid #222; }

.body { display: flex; flex: 1; min-height: 0; }
.left { display: flex; width: 277px; border-right: 1px solid #111; border-bottom: 1px solid #111; }
.strip { display: flex; flex-direction: column; align-items: center; justify-content: flex-end; width: 40px; background: linear-gradient(90deg, #2f2f2f, #393939); border-right: 1px solid #222; }
.play { display: flex; align-items: center; justify-content: center; width: 20px; height: 20px; margin-bottom: 11px; background: #555; border-radius: 2px; }
.layout { align-self: flex-end; width: 36px; height: 44px; padding: 8px 3px; background: linear-gradient(#4a6ea4, #5a6e88 60%, #3f7fd0 90%); border-radius: 3px 0 0 3px; }
.layout span { display: block; height: 28px; border: 1px solid #2b4468; background: #5e6c7a; }
.explorer { display: flex; flex-direction: column; flex: 1; background: #444; }
.tree { flex: 1; padding: 0 3px 0 26px; border-bottom: 1px solid #3a3a3a; }
.treein { height: calc(100% - 5px); border: solid #3a3a3a; border-width: 0 1px 1px; }
.wsrow { display: flex; align-items: center; height: 31px; padding: 0 0 1px 6px; }
.wsname { width: 145px; height: 23px; padding-left: 2px; border: 1px solid #666; color: #ffff1e; font-size: 12px; line-height: 20px; }
.wsrow .caret { margin: 0 6px 0 4px; }
.wsline { width: 1px; height: 24px; margin-right: 7px; background: #888; }
.more { margin: -16px 0 0 auto; padding-right: 8px; color: #4a4a9a; }

.center { display: flex; flex-direction: column; flex: 1; min-width: 0; padding-left: 1px; }
.viewport { flex: 1; min-height: 0; border: 2px solid #746a24; background: #363636; overflow: hidden; position: relative; }
.viewport > svg { position: absolute; inset: 0; width: 100%; height: 100%; }
.gizmo { font-size: 9px; }
.cube { font-size: 10px; }
.timerow { display: flex; gap: 2px; height: 19px; padding: 0 0 2px 1px; color: #ddd; }
.timerow button { background: #5e5e5e; border-radius: 2px; line-height: 15px; }
.tbtn { width: 14px; }
.tslide { width: 123px; }
.track { display: flex; height: 26px; border-top: 1px solid #111; }
.trackic { display: flex; align-items: center; justify-content: center; width: 51px; padding-right: 8px; }
.ruler { flex: 1; width: auto; min-width: 0; height: 25px; background: #2a2a2a; overflow: hidden; }
.ruler text { fill: #d0d0d0; font-size: 11px; }

.command { width: 204px; padding: 0 5px 0 6px; background: #444; border-left: 3px solid #4a4a4a; }
.ctabs { display: flex; margin: 0 0 0 -5px; }
.ctabs button { display: flex; align-items: center; justify-content: center; width: 32px; height: 26px; background: #383838; border-right: 1px solid #303030; }
.ctabs .on { background: #444; }
.cats { display: flex; gap: 2px; margin-top: 6px; }
.cats button { display: flex; align-items: center; justify-content: center; width: 22px; height: 22px; background: none; }
.cats .on { background: #5a85c2; border-radius: 3px; }
.kind { width: 100%; height: 20px; margin-top: 7px; padding-left: 5px; }
.roll { margin: 5px 8px 0 0; padding: 0 9px 4px 10px; background: #505050; border: 1px solid #484848; border-radius: 2px; }
.roll + .roll { margin-top: 4px; padding-bottom: 8px; }
.roll h2 { display: flex; align-items: center; gap: 9px; height: 18px; margin: 0 -2px 0 -6px; color: #fff; font-size: 12px; font-weight: 700; }
.roll .grip { margin-left: auto; color: #999; font-size: 10px; font-weight: 400; }
.autogrid { display: flex; align-items: center; gap: 5px; height: 19px; padding-left: 32px; color: #777; }
.autogrid input { appearance: none; width: 10px; height: 10px; background: #484848; }
.types { display: grid; grid-template-columns: 1fr 1fr; gap: 4px 5px; margin-top: 2px; }
.types button { height: 17px; background: #5f5f5f; border-radius: 2px; border: 1px solid #575757; line-height: 14px; }
.namerow { display: flex; align-items: center; gap: 4px; padding: 8px 4px 0 6px; }
.namerow input { flex: 1; min-width: 0; height: 19px; background: #595959; border: 1px solid #484848; }
.namerow button { width: 17px; height: 20px; background: #c5307f; border: 1px solid #111; }

.status { display: flex; height: 50px; background: #444; color: #eee; }
.script { width: 105px; padding: 3px 5px 3px 1px; border-right: 1px solid #111; }
.pink { width: 98px; height: 21px; background: #dec5c5; border: 1px solid #888; }
.listener { width: 98px; height: 22px; margin-top: 2px; padding-left: 4px; overflow: hidden; background: #fff; border: 1px solid #888; color: #000; font: 11px/19px "Liberation Mono", "Noto Sans CJK SC", monospace; white-space: nowrap; }
.prompts { flex: 1; padding: 3px 0 0 4px; }
.prompts p { height: 25px; line-height: 24px; }
.coordarea { width: 892px; }
.coordrow { display: flex; align-items: center; height: 29px; }
.cicons { display: flex; gap: 9px; width: 74px; }
.coordrow label { display: flex; align-items: center; gap: 4px; width: 75px; justify-content: flex-end; }
.coordrow label + label { margin-left: 8px; }
.coordrow label input { width: 57px; height: 18px; padding-left: 2px; background: #575757; color: #8a8a8a; }
.gridtext { margin-left: 16px; }
.tagrow { display: flex; align-items: center; gap: 5px; padding-left: 306px; }
.tagrow button { display: flex; align-items: center; justify-content: center; width: 22px; height: 20px; background: #5a85c2; border-radius: 3px; }

.taskbar { display: flex; height: 40px; background: linear-gradient(90deg, #26291f 20%, #30331f 35%, #3a3823); }
.start { display: flex; align-items: center; justify-content: center; width: 48px; background: #1b2523; }
.tsearch { display: flex; align-items: center; gap: 10px; width: 343px; padding-left: 12px; background: #f2f2f2; }
.tsearch input { flex: 1; background: none; font-size: 14px; }
.tsearch input::placeholder { color: #333; opacity: 1; }
.tk { position: relative; display: flex; align-items: center; justify-content: center; width: 49px; background: none; }
.tk svg { width: 24px; height: 24px; }
.tk.run::after { content: ""; position: absolute; left: 4px; right: 4px; bottom: 0; height: 2px; background: #76b9ed; }
.tk.cur { background: #5d5e49; }
.tk.cur::after { left: 0; right: 0; }

.maxbtn { position: absolute; left: 0; top: 0; z-index: 3; width: 41px; height: 41px; background: linear-gradient(#a2a2a2, #6c6c6c); border: 1px solid #222; }
.maxbtn svg { position: absolute; left: 10px; top: 3px; }
.maxbtn .caret { position: absolute; right: 2px; top: 18px; }
.maxword { position: absolute; left: 9px; bottom: 0; color: #000; font: 700 8px/10px "DejaVu Sans", sans-serif; }
.appmenu { position: absolute; left: 0; top: 24px; z-index: 2; display: flex; width: 424px; height: 580px; background: #f3f3f3; border: 1px solid #999; border-top-color: #666; color: #111; }
.acts { display: flex; flex-direction: column; width: 143px; padding: 16px 1px 0; background: #d9d9d9; border-right: 1px solid #eee; }
.act { position: relative; display: flex; align-items: center; gap: 6px; height: 46px; padding-left: 14px; background: none; border: 1px solid transparent; color: #222; flex: none; }
.act i { position: absolute; right: 13px; top: 18px; border-width: 4px 0 4px 5px; }
.act.sel { background: #b3d5f5; border-color: #1d5fae; }
.act.sep { margin-top: 3px; }
.act.sep::before { content: ""; position: absolute; left: 9px; right: 0; top: -3px; border-top: 1px solid #aaa; }
.recent { display: flex; flex-direction: column; flex: 1; padding: 10px 15px 12px 8px; }
.rtitle { display: flex; align-items: center; gap: 4px; height: 18px; }
.viewsel { display: flex; align-items: center; gap: 3px; width: 34px; height: 22px; margin: 7px 0 5px; padding-left: 3px; background: #c8c8c8; border: 1px solid #aaa; }
.viewsel .caret { border-width: 4px 4px 0; }
.ghead { display: flex; align-items: center; height: 30px; padding: 10px 2px 0; color: #26265c; }
.ghead.inset { padding-left: 5px; }
.ghead hr { flex: 1; height: 1px; margin: 0 9px 0 3px; background: #26265c; border: 0; }
.file { display: flex; align-items: center; height: 26px; padding: 0 11px 0 5px; color: #000; }
.file span { flex: 1; padding-left: 4px; font-size: 12px; }
.btns { display: flex; justify-content: flex-end; gap: 21px; margin-top: auto; padding-right: 1px; }
.btns button { height: 26px; padding: 0 4px; background: #f8f8f8; border: 1px solid #777; }
.tooltip { position: absolute; left: 63px; top: 220px; z-index: 4; width: 170px; height: 88px; background: #f1f2f6; border: 1px solid #666; color: #555; font-size: 12px; }
.tooltip strong, .tooltip p { display: block; padding: 0 7px; line-height: 24px; white-space: nowrap; }
.tooltip strong { padding-top: 3px; font-weight: 500; }
.tooltip .f1 { margin-top: 4px; border-top: 1px solid #bbb; font-weight: 700; }

.brand { position: absolute; right: 0; bottom: 0; z-index: 5; display: flex; align-items: center; width: 494px; height: 245px; padding: 0 0 2px 44px; background: #fff; color: #0a0a0a; }
.bwords { padding-top: 8px; }
.cn { font: italic 900 53px/54px "Noto Sans CJK SC", sans-serif; white-space: nowrap; }
.url { font: italic 500 36px/32px "Noto Sans", sans-serif; white-space: nowrap; }
</style>
